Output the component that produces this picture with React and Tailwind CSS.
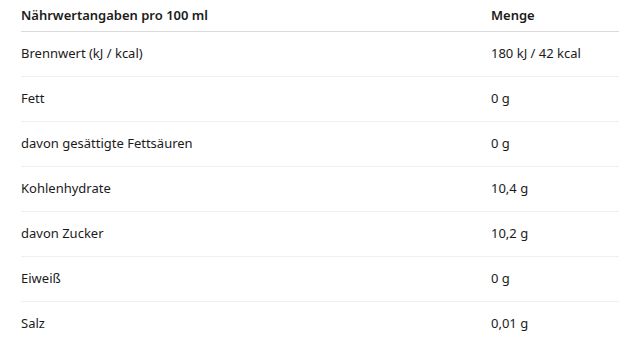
import React from 'react';

const rows = [
  { label: 'Brennwert (kJ / kcal)', value: '180 kJ / 42 kcal' },
  { label: 'Fett', value: '0 g' },
  { label: 'davon gesättigte Fettsäuren', value: '0 g' },
  { label: 'Kohlenhydrate', value: '10,4 g' },
  { label: 'davon Zucker', value: '10,2 g' },
  { label: 'Eiweiß', value: '0 g' },
  { label: 'Salz', value: '0,01 g' },
];

const App = () => {
  return (
    <div className="w-[619px] h-[362px] bg-white overflow-hidden font-['Noto_Sans',sans-serif] text-[13px] text-[#1b1b1b]">
      <table className="ml-[21px] w-[598px] border-collapse">
        <thead>
          <tr className="border-b border-[#dadada]">
            <th className="h-[31px] p-0 text-left font-semibold w-[470px]">Nährwertangaben pro 100 ml</th>
            <th className="h-[31px] p-0 text-left font-semibold">Menge</th>
          </tr>
        </thead>
        <tbody>
          {rows.map((row, i) => (
            <tr key={row.label} className={i < rows.length - 1 ? 'border-b border-[#efefef]' : ''}>
              <td className="h-[45px] p-0">{row.label}</td>
              <td className="h-[45px] p-0">{row.value}</td>
            </tr>
          ))}
        </tbody>
      </table>
    </div>
  );
};

export default App;
